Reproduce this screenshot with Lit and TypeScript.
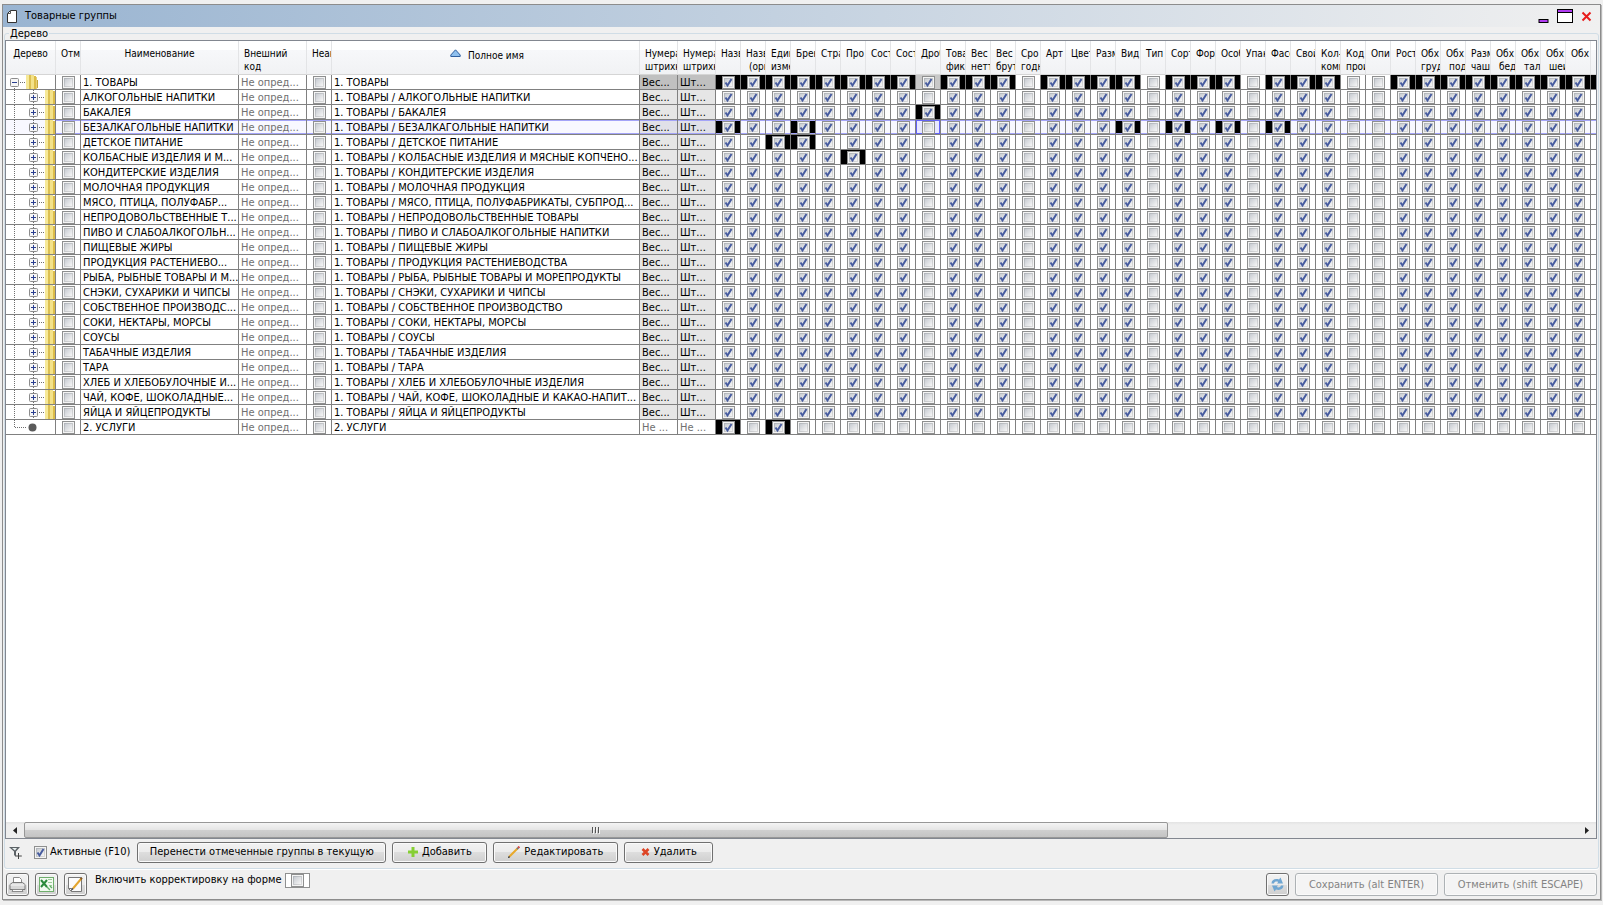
import { LitElement, html, css, svg, nothing } from "lit";
import { customElement } from "lit/decorators.js";
import { classMap } from "lit/directives/class-map.js";

interface Group {
  name: string;
  full: string;
}

interface Attr {
  top: string;
  bottom?: string;
  indent?: boolean;
}

const ROOT = "1. ТОВАРЫ";

const child = (name: string, full = name): Group => ({ name, full: `${ROOT} / ${full}` });

const GROUPS: Group[] = [
  { name: ROOT, full: ROOT },
  child("АЛКОГОЛЬНЫЕ НАПИТКИ"),
  child("БАКАЛЕЯ"),
  child("БЕЗАЛКАГОЛЬНЫЕ НАПИТКИ"),
  child("ДЕТСКОЕ ПИТАНИЕ"),
  child("КОЛБАСНЫЕ ИЗДЕЛИЯ И М...", "КОЛБАСНЫЕ ИЗДЕЛИЯ И МЯСНЫЕ КОПЧЕНО..."),
  child("КОНДИТЕРСКИЕ ИЗДЕЛИЯ"),
  child("МОЛОЧНАЯ ПРОДУКЦИЯ"),
  child("МЯСО, ПТИЦА, ПОЛУФАБР...", "МЯСО, ПТИЦА, ПОЛУФАБРИКАТЫ, СУБПРОД..."),
  child("НЕПРОДОВОЛЬСТВЕННЫЕ Т...", "НЕПРОДОВОЛЬСТВЕННЫЕ ТОВАРЫ"),
  child("ПИВО И СЛАБОАЛКОГОЛЬН...", "ПИВО И СЛАБОАЛКОГОЛЬНЫЕ НАПИТКИ"),
  child("ПИЩЕВЫЕ ЖИРЫ"),
  child("ПРОДУКЦИЯ РАСТЕНИЕВО...", "ПРОДУКЦИЯ РАСТЕНИЕВОДСТВА"),
  child("РЫБА, РЫБНЫЕ ТОВАРЫ И М...", "РЫБА, РЫБНЫЕ ТОВАРЫ И МОРЕПРОДУКТЫ"),
  child("СНЭКИ, СУХАРИКИ И ЧИПСЫ"),
  child("СОБСТВЕННОЕ ПРОИЗВОДС...", "СОБСТВЕННОЕ ПРОИЗВОДСТВО"),
  child("СОКИ, НЕКТАРЫ, МОРСЫ"),
  child("СОУСЫ"),
  child("ТАБАЧНЫЕ ИЗДЕЛИЯ"),
  child("ТАРА"),
  child("ХЛЕБ И ХЛЕБОБУЛОЧНЫЕ И...", "ХЛЕБ И ХЛЕБОБУЛОЧНЫЕ ИЗДЕЛИЯ"),
  child("ЧАЙ, КОФЕ, ШОКОЛАДНЫЕ...", "ЧАЙ, КОФЕ, ШОКОЛАДНЫЕ И КАКАО-НАПИТ..."),
  child("ЯЙЦА И ЯЙЦЕПРОДУКТЫ"),
  { name: "2. УСЛУГИ", full: "2. УСЛУГИ" },
];

const ATTRS: Attr[] = [
  { top: "Назв" },
  { top: "Назв", bottom: "(ори", indent: true },
  { top: "Един", bottom: "изме" },
  { top: "Брен" },
  { top: "Стра" },
  { top: "Про" },
  { top: "Сост" },
  { top: "Сост" },
  { top: "Дроб" },
  { top: "Това", bottom: "фик" },
  { top: "Вес", bottom: "нетт" },
  { top: "Вес", bottom: "брут" },
  { top: "Сро", bottom: "годн" },
  { top: "Арт" },
  { top: "Цвет" },
  { top: "Разм" },
  { top: "Вид" },
  { top: "Тип" },
  { top: "Сорт" },
  { top: "Фор" },
  { top: "Особ" },
  { top: "Упак" },
  { top: "Фасо" },
  { top: "Свой" },
  { top: "Кол-", bottom: "комп" },
  { top: "Код", bottom: "прои" },
  { top: "Опи" },
  { top: "Рост" },
  { top: "Обх", bottom: "груд" },
  { top: "Обх", bottom: "под", indent: true },
  { top: "Разм", bottom: "чаше" },
  { top: "Обх", bottom: "бед", indent: true },
  { top: "Обх", bottom: "тал", indent: true },
  { top: "Обх", bottom: "шеи", indent: true },
  { top: "Обх" },
];

const LAST = GROUPS.length - 1;
const OFF = new Set([12, 17, 21, 25, 26]);
const FRACTION = 8;
const CURRENT_ROW = 3;
const OVERRIDES: Record<number, number[]> = {
  2: [FRACTION],
  3: [0, 3, 16, 18, 20, 22],
  4: [2, 3],
  5: [5],
  [LAST]: [0, 2],
};

const isOwn = (r: number, c: number) =>
  r === 0 ? !OFF.has(c) && c !== FRACTION : (OVERRIDES[r] ?? []).includes(c);

const isChecked = (r: number, c: number) => {
  if (r === LAST) return isOwn(r, c);
  if (c === FRACTION) return r === 0 || r === 2;
  return !OFF.has(c);
};

const folder = (x: number) => svg`
  <rect x=${x} y="0" width="3" height="14" fill="#f6e998"/>
  <rect x=${x + 3} y="0" width="2" height="14" fill="#dcc052"/>
  <rect x=${x + 5} y="0" width="3" height="14" fill="#f3e28a"/>
  <rect x=${x + 8} y="1" width="2" height="13" fill="#dcbc48"/>
  <rect x=${x + 10} y="2" width="1" height="12" fill="#e6cf78"/>
  <rect x=${x + 11} y="5" width="1" height="8" fill="#c3a53a"/>`;

const toggle = (x: number, open: boolean) => svg`
  <rect x=${x + 0.5} y="3.5" width="8" height="8" rx="1" fill="#f6f6f6" stroke="#8c8c8c"/>
  <path d="M${x + 2} 7.5h5" stroke="#2a3f8f"/>
  ${open ? nothing : svg`<path d="M${x + 4.5} 5v5" stroke="#2a3f8f"/>`}`;

const dots = (d: string) => svg`<path d=${d} stroke="#6e6e6e" stroke-dasharray="1 1" fill="none"/>`;

@customElement("app-root")
export class AppRoot extends LitElement {
  static styles = css`
    :host {
      display: flex;
      box-sizing: border-box;
      height: 100vh;
      padding: 4px 2px 5px 2px;
      background: #f0f0f0;
      color: #000;
      font: 11px/14px "DejaVu Sans Condensed", "DejaVu Sans", sans-serif;
    }
    * { box-sizing: border-box; }
    .window {
      flex: 1;
      min-width: 0;
      display: flex;
      flex-direction: column;
      border: 1px solid #8c8c8c;
      box-shadow: 1px 1px 0 #b8b8b8;
      background: #f0f0f0;
    }
    .title {
      display: flex;
      align-items: center;
      gap: 8px;
      height: 22px;
      flex: none;
      padding: 0 8px 0 4px;
      background: linear-gradient(90deg, #99b4d1, #f0f0f0);
    }
    .title h1 {
      flex: 1;
      margin: 0;
      font: inherit;
    }
    .ctl {
      padding: 0;
      border: 0;
      background: none;
      display: block;
    }
    svg { display: block; flex: none; }
    .group {
      flex: 1;
      min-width: 0;
      min-height: 0;
      margin: 0 1px;
      padding: 0;
      border: 1px solid #d0dde6;
      border-radius: 3px;
      box-shadow: 0 1px 0 #fff;
    }
    .group legend {
      margin-left: 4px;
      padding: 0 1px;
      line-height: 13px;
    }
    .body {
      height: 100%;
      display: flex;
      flex-direction: column;
    }
    .pane {
      flex: 1;
      min-height: 0;
      display: flex;
      flex-direction: column;
      margin-right: 1px;
      border: 1px solid #828790;
      background: #fff;
    }
    .view {
      flex: 1;
      min-height: 0;
      overflow: hidden;
    }
    table {
      width: 100%;
      table-layout: fixed;
      border-collapse: separate;
      border-spacing: 0;
    }
    .c-tree { width: 50px; }
    .c-box { width: 25px; }
    .c-name { width: 158px; }
    .c-code { width: 68px; }
    .c-full { width: 308px; }
    .c-num { width: 38px; }
    th {
      height: 34px;
      padding: 6px 0 0 5px;
      overflow: hidden;
      vertical-align: top;
      text-align: left;
      white-space: nowrap;
      font-weight: normal;
      font-size: 10px;
      line-height: 13px;
      border-right: 1px solid #e3e4e6;
      border-bottom: 1px solid #d5d5d5;
      background: linear-gradient(#fff 9px, #f7f8fa 9px, #f1f2f4);
    }
    th.mid {
      padding-left: 0;
      text-align: center;
    }
    th .indent { padding-left: 3px; }
    th .sort {
      display: flex;
      justify-content: center;
      gap: 7px;
      padding: 2px 0 0 3px;
    }
    td {
      height: 15px;
      padding: 1px 0 0 2px;
      overflow: hidden;
      white-space: nowrap;
      line-height: 13px;
      border-right: 1px solid #808080;
      border-bottom: 1px solid #808080;
    }
    td.tree { padding: 0; }
    td.box { padding: 1px 0 0 6px; }
    td:last-child, th:last-child { border-right: 0; }
    .dim { color: #707070; }
    .inherited { background: #e6e6e6; }
    .strong { background: #c0c0c0; }
    .current td {
      background: #f8f8ff;
      box-shadow: inset 0 1px #a4a4f8, inset 0 -1px #a4a4f8;
    }
    .current td.tree { box-shadow: none; }
    .current td.inherited { background: #e0e0e8; }
    td.own, .current td.own { background: #000; }
    td.soft { background: #c8c8c8; }
    .current td.focus {
      background: #e8e8ff;
      box-shadow: inset 0 0 0 1px #6464f8;
    }
    input[type="checkbox"] {
      appearance: none;
      display: block;
      flex: none;
      width: 13px;
      height: 13px;
      margin: 0;
      border: 1px solid #8e8f8f;
      background:
        linear-gradient(135deg, #c8ccd2, #f6f6f6) 2px 2px / 7px 7px no-repeat,
        linear-gradient(135deg, #aeb3b9, #dcdcdc) 1px 1px / 9px 9px no-repeat,
        #f4f4f4;
    }
    input[type="checkbox"]:checked {
      background:
        url("data:image/svg+xml,%3Csvg xmlns='http://www.w3.org/2000/svg' width='11' height='11'%3E%3Cpath d='M2.5 5.5L4.5 8.5L8.5 2' fill='none' stroke='%23475c9f' stroke-width='2'/%3E%3C/svg%3E") 0 0 no-repeat,
        linear-gradient(135deg, #c8ccd2, #f6f6f6) 2px 2px / 7px 7px no-repeat,
        linear-gradient(135deg, #aeb3b9, #dcdcdc) 1px 1px / 9px 9px no-repeat,
        #f4f4f4;
    }
    .scroll {
      display: flex;
      align-items: stretch;
      height: 16px;
      flex: none;
      background: linear-gradient(#e3e3e3, #eee 3px, #eee);
    }
    .arrow {
      width: 18px;
      padding: 0;
      border: 0;
      background: none;
      display: grid;
      place-items: center;
    }
    .track { flex: 1; display: flex; }
    .thumb {
      width: 73.6%;
      display: grid;
      place-items: center;
      border: 1px solid #979797;
      border-radius: 2px;
      background: linear-gradient(#f4f4f4, #e4e4e4 50%, #cfcfcf 50%, #c4c4c4);
    }
    .tools {
      display: flex;
      align-items: center;
      gap: 6px;
      flex: none;
      height: 29px;
      padding: 0 4px 3px 4px;
    }
    .check {
      display: flex;
      align-items: center;
      gap: 3px;
      padding: 0 1px 0 6px;
    }
    .btn {
      display: flex;
      align-items: center;
      justify-content: center;
      gap: 4px;
      height: 21px;
      padding: 0;
      font: inherit;
      color: #000;
      border: 1px solid #707070;
      border-radius: 3px;
      box-shadow: inset 0 0 0 1px #fafafa;
      background: linear-gradient(#f2f2f2, #ebebeb 50%, #dddddd 50%, #cfcfcf);
    }
    .move { width: 249px; }
    .add { width: 95px; }
    .edit { width: 125px; }
    .del { width: 89px; }
    .square { width: 23px; height: 23px; }
    .save { width: 143px; height: 23px; }
    .cancel { width: 153px; height: 23px; }
    .btn:disabled {
      color: #838383;
      border-color: #adb2b5;
      background: #f4f4f4;
    }
    .footer {
      display: flex;
      align-items: flex-start;
      gap: 6px;
      flex: none;
      padding: 4px 3px 3px 3px;
    }
    .adjust {
      flex: 1;
      display: flex;
      gap: 4px;
      padding-left: 2px;
    }
    .well {
      display: flex;
      justify-content: center;
      width: 25px;
      height: 15px;
      border: 1px solid #8e8f8f;
      background: #fff;
    }
  `;

  private tree(r: number) {
    const last = r === LAST;
    return html`<svg width="49" height="14" viewBox="0 0 49 14" aria-hidden="true">
      ${r === 0
        ? svg`${toggle(4, true)}${dots("M14 7.5h6")}${folder(20)}${dots("M8.5 13v1")}`
        : last
          ? svg`${dots("M8.5 0v8")}${dots("M9 7.5h11")}<circle cx="26.5" cy="7.5" r="4" fill="#5a5a5a"/>`
          : svg`${dots("M8.5 0v14")}${dots("M27.5 0v14")}${toggle(23, false)}${dots("M33 7.5h5")}${folder(39)}`}
    </svg>`;
  }

  private row(g: Group, r: number) {
    const last = r === LAST;
    const num = { inherited: !last, strong: r === 0, dim: last };
    return html`<tr class=${classMap({ current: r === CURRENT_ROW })}>
      <td class="tree">${this.tree(r)}</td>
      <td class="box"><input type="checkbox" aria-label="Отм: ${g.name}" /></td>
      <td>${g.name}</td>
      <td class="dim">Не опред...</td>
      <td class="box"><input type="checkbox" aria-label="Неак: ${g.name}" /></td>
      <td>${g.full}</td>
      <td class=${classMap(num)}>${last ? "Не ..." : "Вес..."}</td>
      <td class=${classMap(num)}>${last ? "Не ..." : "Шт..."}</td>
      ${ATTRS.map((a, c) => html`<td class=${classMap({
        box: true,
        own: isOwn(r, c),
        soft: r === 0 && c === FRACTION,
        focus: r === CURRENT_ROW && c === FRACTION,
      })}><input type="checkbox" aria-label="${a.top}: ${g.name}" .checked=${isChecked(r, c)} /></td>`)}
      <td class=${classMap({ own: r === 0 })}></td>
    </tr>`;
  }

  render() {
    return html`
      <main class="window">
        <header class="title">
          <svg width="10" height="13" viewBox="0 0 10 13" aria-hidden="true">
            <path d="M3.5 .5h6v12h-9v-9z" fill="#fff" stroke="#333"/>
            <path d="M.5 3.5h3v-3" fill="none" stroke="#555"/>
          </svg>
          <h1>Товарные группы</h1>
          <button class="ctl" aria-label="Свернуть">
            <svg width="11" height="15" viewBox="0 0 11 15"><rect x="1" y="10.5" width="9" height="3" fill="#b03cf0" stroke="#000"/></svg>
          </button>
          <button class="ctl" aria-label="Развернуть">
            <svg width="16" height="15" viewBox="0 0 16 15">
              <rect x=".5" y=".5" width="15" height="13" fill="#fff" stroke="#000"/>
              <rect x="1" y="1" width="14" height="2" fill="#b03cf0"/><path d="M1 3.5h14" stroke="#000"/>
            </svg>
          </button>
          <button class="ctl" aria-label="Закрыть">
            <svg width="11" height="11" viewBox="0 0 11 11"><path d="M1.5 1.5l8 8M9.5 1.5l-8 8" stroke="#e81c1c" stroke-width="2"/></svg>
          </button>
        </header>

        <fieldset class="group">
          <legend>Дерево</legend>
          <div class="body">
            <div class="pane">
              <div class="view">
                <table>
                  <colgroup>
                    <col class="c-tree" /><col class="c-box" /><col class="c-name" /><col class="c-code" />
                    <col class="c-box" /><col class="c-full" /><col class="c-num" /><col class="c-num" />
                    ${ATTRS.map(() => html`<col class="c-box" />`)}
                    <col />
                  </colgroup>
                  <thead>
                    <tr>
                      <th class="mid">Дерево</th>
                      <th>Отм</th>
                      <th class="mid">Наименование</th>
                      <th>Внешний<br />код</th>
                      <th>Неак</th>
                      <th class="mid">
                        <div class="sort">
                          <svg width="11" height="9" viewBox="0 0 11 9" aria-hidden="true">
                            <path d="M5.5 .8L10.2 6v1.5H.8V6z" fill="#8fc0ee" stroke="#2f5f9f"/>
                          </svg>
                          Полное имя
                        </div>
                      </th>
                      <th>Нумера<br />штрихк</th>
                      <th>Нумера<br />штрихк</th>
                      ${ATTRS.map((a) => html`<th>${a.top}${a.bottom
                        ? html`<div class=${classMap({ indent: !!a.indent })}>${a.bottom}</div>`
                        : nothing}</th>`)}
                      <th></th>
                    </tr>
                  </thead>
                  <tbody>${GROUPS.map((g, r) => this.row(g, r))}</tbody>
                </table>
              </div>
              <div class="scroll">
                <button class="arrow" aria-label="Влево"><svg width="4" height="7" viewBox="0 0 4 7"><path d="M4 0v7L0 3.5z" fill="#222"/></svg></button>
                <div class="track">
                  <div class="thumb">
                    <svg width="9" height="7" viewBox="0 0 9 7"><path d="M1.5 0v6M4.5 0v6M7.5 0v6" stroke="#555"/><path d="M2.5 1v6M5.5 1v6M8.5 1v6" stroke="#f4f4f4"/></svg>
                  </div>
                </div>
                <button class="arrow" aria-label="Вправо"><svg width="4" height="7" viewBox="0 0 4 7"><path d="M0 0v7l4-3.5z" fill="#222"/></svg></button>
              </div>
            </div>

            <div class="tools">
              <svg width="13" height="13" viewBox="0 0 13 13" aria-hidden="true">
                <path d="M0 1h11L7 5.5V11L5 9V5.5z" fill="#5c6266"/>
                <path d="M3 2h5L6 4.5z" fill="#e8f0f0"/>
                <path d="M9.5 7v6M6.8 10h6" stroke="#444"/>
              </svg>
              <label class="check"><input type="checkbox" .checked=${true} />Активные (F10)</label>
              <button class="btn move">Перенести отмеченные группы в текущую</button>
              <button class="btn add">
                <svg width="10" height="10" viewBox="0 0 10 10" aria-hidden="true"><path d="M3.5 0h3v3.5H10v3H6.5V10h-3V6.5H0v-3h3.5z" fill="#86cf34"/></svg>
                Добавить
              </button>
              <button class="btn edit">
                <svg width="12" height="12" viewBox="0 0 12 12" aria-hidden="true">
                  <path d="M1.2 10.8L9.5 2.5" stroke="#e8a92c" stroke-width="2"/><path d="M9 3l1.4-1.4" stroke="#777" stroke-width="2"/>
                  <path d="M10.2 1.8L11.4 .6" stroke="#d84040" stroke-width="2"/><path d="M.3 11.7l1.2-1.2" stroke="#333" stroke-width="1.5"/>
                </svg>
                Редактировать
              </button>
              <button class="btn del">
                <svg width="9" height="8" viewBox="0 0 9 8" aria-hidden="true"><path d="M1.5 1l6 6M7.5 1l-6 6" stroke="#dd4526" stroke-width="2.6"/></svg>
                Удалить
              </button>
            </div>
          </div>
        </fieldset>

        <footer class="footer">
          <button class="btn square" aria-label="Печать">
            <svg width="17" height="17" viewBox="0 0 17 17">
              <path d="M4.5 7V1.5h6l2 2V7" fill="#fff" stroke="#8a8a8a"/>
              <path d="M1 8.5L3.5 6.5h10L16 8.5v5H1z" fill="#d8d8d8" stroke="#777"/>
              <path d="M1.5 9h14" stroke="#f8f8f8"/><path d="M4 13.5h9l1 2H3z" fill="#fafafa" stroke="#8a8a8a"/>
            </svg>
          </button>
          <button class="btn square" aria-label="Excel">
            <svg width="17" height="17" viewBox="0 0 17 17">
              <rect x="1.5" y="1.5" width="14" height="14" fill="#f2faf0" stroke="#6fae6c"/>
              <path d="M10 3.5h4M10 6.5h4M11 9.5h3" stroke="#9ccb98"/>
              <path d="M3 4l6 7M9 4l-6 7" stroke="#2b8a3b" stroke-width="2"/>
              <path d="M9 11l3 3M12 10l2 2" stroke="#5fae66" stroke-width="1.4"/>
            </svg>
          </button>
          <button class="btn square" aria-label="Правка формы">
            <svg width="17" height="17" viewBox="0 0 17 17">
              <path d="M1.5 1.5h13v14h-10l-3-3z" fill="#fbfbfb" stroke="#777"/>
              <path d="M1.5 12.5h3v3" fill="none" stroke="#777"/>
              <path d="M6 12.5L14 3" stroke="#e3a52e" stroke-width="2"/><path d="M13.6 3.4l1.4-1.6" stroke="#8a5a20" stroke-width="2"/>
              <path d="M5 13.6l1-1.2" stroke="#333" stroke-width="1.5"/>
            </svg>
          </button>
          <label class="adjust">Включить корректировку на форме
            <span class="well"><input type="checkbox" /></span>
          </label>
          <button class="btn square" aria-label="Обновить">
            <svg width="15" height="15" viewBox="0 0 15 15">
              <path d="M1.500 6.500C1.500 3 5 1.200 9 2.500L10.500 .5l2.500 6H7l1.200-1.500C6.500 4.200 4.500 4.600 4 6.500z" fill="#6fa6d2"/>
              <path d="M13.500 8.500c0 3.500-3.500 5.300-7.500 4L4.500 14.500 2 8.500h6L6.800 10c1.700.8 3.700.4 4.200-1.500z" fill="#6fa6d2"/>
            </svg>
          </button>
          <button class="btn save" disabled>Сохранить (alt ENTER)</button>
          <button class="btn cancel" disabled>Отменить (shift ESCAPE)</button>
        </footer>
      </main>
    `;
  }
}
